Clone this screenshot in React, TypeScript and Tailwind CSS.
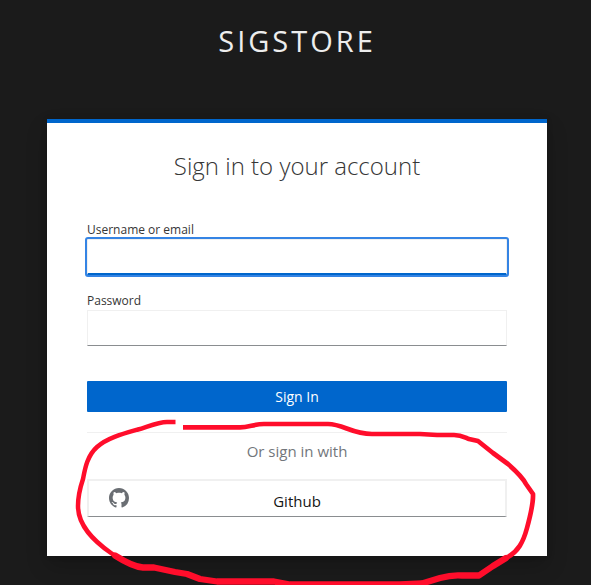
import React from "react";

function GithubIcon() {
  return (
    <svg width="20" height="20" viewBox="0 0 16 16" fill="#6a6e73" aria-hidden="true">
      <path d="M8 0C3.58 0 0 3.58 0 8c0 3.54 2.29 6.53 5.47 7.59.4.07.55-.17.55-.38 0-.19-.01-.82-.01-1.49-2.01.37-2.53-.49-2.69-.94-.09-.23-.48-.94-.82-1.13-.28-.15-.68-.52-.01-.53.63-.01 1.08.58 1.23.82.72 1.21 1.87.87 2.33.66.07-.52.28-.87.51-1.07-1.78-.2-3.64-.89-3.64-3.95 0-.87.31-1.59.82-2.15-.08-.2-.36-1.02.08-2.12 0 0 .67-.21 2.2.82.64-.18 1.32-.27 2-.27s1.36.09 2 .27c1.53-1.04 2.2-.82 2.2-.82.44 1.1.16 1.92.08 2.12.51.56.82 1.27.82 2.15 0 3.07-1.87 3.75-3.65 3.95.29.25.54.73.54 1.48 0 1.07-.01 1.93-.01 2.2 0 .21.15.46.55.38A8.01 8.01 0 0 0 16 8c0-4.42-3.58-8-8-8z" />
    </svg>
  );
}

function MarkerCircle() {
  return (
    <svg
      className="pointer-events-none absolute top-0 left-0"
      width="591"
      height="585"
      viewBox="0 0 591 585"
      fill="none"
      stroke="#ff0d2b"
      strokeLinecap="butt"
      strokeLinejoin="round"
    >
      <path
        strokeWidth="4.700"
        d="M183 427.300H240C249 427.300 254 424 264 424H328C343 424 352 434 372 434H420L437 435H454C461 435 464 437 469 439L478 441L493 453L508 464C516 471 523 478 526 484L533 494C533.500 504 530 517 527 528C523 543 518 551 508 557"
      />
      <path
        strokeWidth="4.500"
        d="M175.500 422H167C158 422 147 427 138 429.500C122 434 107 438 97 447C87 456 85 469 83 479C80 488 78 496 78 506C78 526 94 541 111 553L118 558"
      />
      <path
        strokeWidth="6.300"
        strokeLinecap="round"
        d="M115 555.500C126 562.500 135 567 143 567.500H154L175 572L187 574L200 579L217 581.500H274L290 584.500H400L422 583.500L440 578C449 575.500 456 575 462 575.500H479L493 566L506 558"
      />
    </svg>
  );
}

export default function App() {
  return (
    <div className="relative flex h-[585px] w-[591px] flex-col overflow-hidden bg-[#1b1b1b] font-['Open_Sans',sans-serif]">
      <header className="h-[119px] shrink-0 pt-[21px] pl-[3px] text-center text-[29px] leading-[40px] tracking-[3px] text-[#ededed] uppercase">
        sigstore
      </header>
      <main className="ml-[47px] flex h-[437px] w-[500px] shrink-0 flex-col border-t-4 border-[#0066cc] bg-white px-10 shadow-[0_10px_20px_rgba(3,3,3,0.19),0_0_6px_rgba(3,3,3,0.1)]">
        <h1 className="pt-[27px] text-center text-2xl leading-[32px] font-light text-[#363636]">
          Sign in to your account
        </h1>
        <form className="mt-[39px] flex flex-col" onSubmit={(e) => e.preventDefault()}>
          <label htmlFor="username" className="h-[18px] text-xs leading-[18px] text-[#363636]">
            Username or email
          </label>
          <div className="flex h-9 rounded-[1px] outline-2 outline-[#3584e4]">
            <input
              id="username"
              className="h-9 w-full border border-b-2 border-[#f0f0f0] border-b-[#0066cc] outline-none"
            />
          </div>
          <label htmlFor="password" className="mt-[17px] h-[18px] text-xs leading-[18px] text-[#363636]">
            Password
          </label>
          <input
            id="password"
            type="password"
            className="h-9 w-full border border-[#f0f0f0] border-b-[#8a8d90] outline-none"
          />
          <button className="mt-[35px] h-[31px] rounded-[1px] bg-[#0066cc] text-sm leading-[31px] text-white">
            Sign In
          </button>
        </form>
        <section className="mt-5 flex flex-col border-t border-[#f0f0f0]">
          <h2 className="mt-[6px] text-center text-[15px] leading-[24px] text-[#72767b]">Or sign in with</h2>
          <a className="mt-4 flex h-[38px] items-center border-2 border-b border-[#f0f0f0] border-b-[#8a8d90] px-5 text-[15px] text-[#151515]">
            <span className="mb-[2px] w-5">
              <GithubIcon />
            </span>
            <span className="mt-[5px] mr-5 flex-1 text-center leading-6">Github</span>
          </a>
        </section>
      </main>
      <MarkerCircle />
    </div>
  );
}
